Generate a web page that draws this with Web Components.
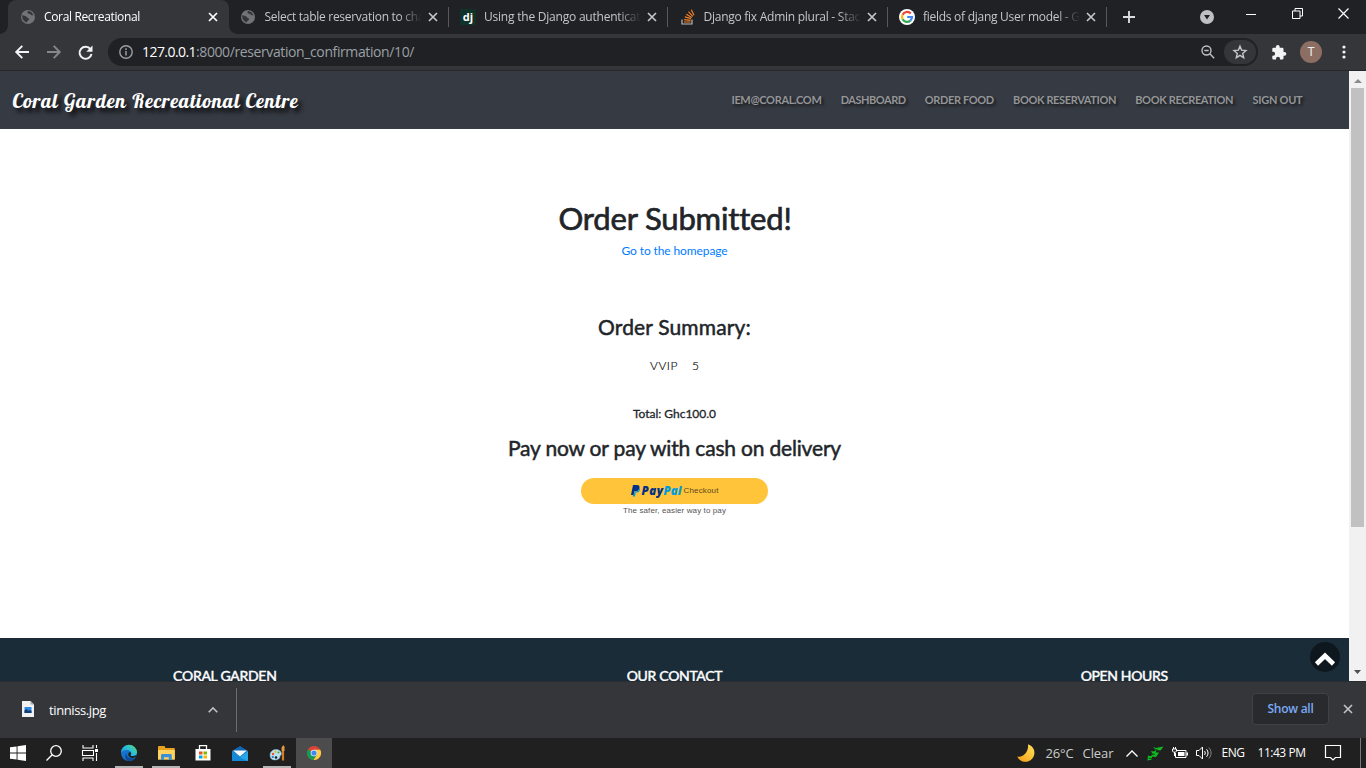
<!DOCTYPE html>
<html lang="en">
<head>
<meta charset="utf-8">
<title>Coral Recreational</title>
<style>
html,body{margin:0;width:1366px;height:768px;overflow:hidden;background:#202124}
</style>
</head>
<body>
<desktop-screen></desktop-screen>
<script>
const ICONS = {
globe:[14,14,'<circle cx="7" cy="7" r="7" fill="#707377"/><path d="M1.2 5.2c2 .2 2.600.8 4 1.200 1 .6.800 1.600 2.400 1.800 1 .8.200 1.800-.8 2.600-.9.700-.8 1.600-1.600 1.800L3 10.800C1.800 9.500 1 8 1.200 5.200zM6.200 1.400c.9 0 .6 1 .2 1.500.8 1.200 2.600.2 3.400 1.500.6 1.100 1.500.9 2.700.9L10.800 2.500 8 1.100z" fill="#33353a"/>'],
close:[10,10,'<path d="M1 1l8 8M9 1l-8 8" stroke="currentColor" stroke-width="1.7" fill="none"/>'],
dj:[16,16,'<rect width="16" height="16" rx="1" fill="#113228"/><text x="8" y="11.500" text-anchor="middle" font-family="Open Sans, sans-serif" font-weight="700" font-size="11" fill="#fff">dj</text>'],
stack:[14,16,'<path d="M1 10.500v4.500h10v-4.500" stroke="#bcbbbb" stroke-width="1.200" fill="none"/><path d="M3 13h6.500M3.100 10.600l6.400.8M3.800 7.900l6.200 1.700M5.300 5.200l5.500 3.300M7.500 2.700l4.300 4.700M10.300.8l2.700 5.500" stroke="#f48024" stroke-width="1.200"/>'],
google:[16,16,'<circle cx="8" cy="8" r="8" fill="#fff"/><g fill="none" stroke-width="2.200"><path d="M11.800 4.600A5 5 0 0 0 3.600 5.700" stroke="#ea4335"/><path d="M3.600 5.700a5 5 0 0 0 0 4.600" stroke="#fbbc05"/><path d="M3.600 10.300a5 5 0 0 0 7.800 1.300" stroke="#34a853"/><path d="M11.400 11.600A5 5 0 0 0 13 8H8.200" stroke="#4285f4"/></g>'],
plus:[12,12,'<path d="M6 0v12M0 6h12" stroke="#dadce0" stroke-width="1.900"/>'],
tabsearch:[14,14,'<circle cx="7" cy="7" r="7" fill="#bdc1c6"/><path d="M4 5h6L7 9.500z" fill="#202124"/>'],
min:[10,10,'<path d="M0 5.500h10" stroke="#fff"/>'],
restore:[11,11,'<path d="M.5 3h7.500v7.500H.5zM3 3V.5h7.500V8H8" fill="none" stroke="#fff"/>'],
winx:[11,11,'<path d="M.5.5l10 10M10.500.5l-10 10" stroke="#fff" stroke-width="1.200"/>'],
back:[14,14,'<path d="M14 7H1.500M7.300.8L1.200 7l6.100 6.200" fill="none" stroke="#f1f3f4" stroke-width="1.900"/>'],
fwd:[14,14,'<path d="M0 7h12.500M6.700.8L12.800 7l-6.100 6.200" fill="none" stroke="#85878a" stroke-width="1.900"/>'],
reload:[15,15,'<path d="M12.500 4.300A6 6 0 1 0 13.500 9" fill="none" stroke="#f1f3f4" stroke-width="2"/><path d="M14.500.5v6.200H8.300z" fill="#f1f3f4"/>'],
info:[14,14,'<circle cx="7" cy="7" r="6.200" fill="none" stroke="#9aa0a6" stroke-width="1.400"/><path d="M7 6v4.500M7 3.300v1.600" stroke="#9aa0a6" stroke-width="1.500"/>'],
zoom:[14,14,'<circle cx="5.500" cy="5.500" r="4.500" fill="none" stroke="#bdc1c6" stroke-width="1.400"/><path d="M3.300 5.500h4.400M8.800 8.800l4.400 4.400" stroke="#bdc1c6" stroke-width="1.400"/>'],
star:[14,14,'<path d="M7 1.200l1.600 3.900 4.400.4-3.300 2.900 1 4.300L7 10.400l-3.700 2.300 1-4.300L1 5.500l4.400-.4z" fill="none" stroke="#c4c7c9" stroke-width="1.400"/>'],
puzzle:[15,15,'<path d="M12.500 7H11.500V4A1.300 1.300 0 0 0 10.200 2.700H7.700V1.900a1.900 1.900 0 0 0-3.800 0v.8H1.600A1.300 1.300 0 0 0 .3 4v2.700h.8a2 2 0 0 1 0 4H.3v2.500a1.300 1.300 0 0 0 1.300 1.300H4v-.8a2 2 0 0 1 4 0v.8h2.200a1.300 1.300 0 0 0 1.300-1.300v-2.500h1a1.850 1.850 0 0 0 0-3.700z" fill="#f1f3f4"/>'],
dots:[4,14,'<g fill="#f1f3f4"><circle cx="2" cy="2" r="1.600"/><circle cx="2" cy="7" r="1.600"/><circle cx="2" cy="12" r="1.600"/></g>'],
up:[9,5,'<path d="M1 5l4-4 4 4z" fill="#8b8b8b"/>'],
down:[9,5,'<path d="M1 0h7L4.500 4z" fill="#505050"/>'],
pp:[9,12,'<path d="M2 0h4c2 0 2.900 1.200 2.400 3.200C7.900 5.300 6.500 6.300 4.500 6.300H3.300L2.600 10H0z" fill="#003087"/><path d="M8.500 2.700c.6.700.6 1.500.4 2.300-.5 1.900-1.700 2.600-3.600 2.600h-.7L4 11.500H1.700L2 9.900h.800l.7-3.400h1.200c2 0 3.400-1.100 3.800-3.800z" fill="#009cde"/>'],
top:[30,30,'<circle cx="15" cy="15" r="15" fill="#0e171e"/><path d="M6.500 22L15 13.800l8.500 8.200" fill="none" stroke="#fff" stroke-width="4.600"/>'],
file:[12,16,'<path d="M0 0h8.500L12 3.500V16H0z" fill="#f2f2f2"/><path d="M8.500 0v3.500H12" fill="#aaa"/><rect x="2.500" y="6" width="7" height="6" fill="#2f8ae0"/><path d="M2.500 12V9.500l2-1.500 2 2 1.500-1 1.500 1V12z" fill="#123e75"/>'],
chevgray:[10,6,'<path d="M.7 5.300L5 1l4.300 4.300" fill="none" stroke="#bdc1c6" stroke-width="1.600"/>'],
win:[16,16,'<path d="M0 2.300l6.600-.9v6.100H0zM7.500 1.200L16 0v7.500H7.500zM0 8.400h6.600v6.200L0 13.700zM7.500 8.400H16V16l-8.500-1.200z" fill="#fff"/>'],
search:[16,16,'<circle cx="10" cy="6" r="5.300" fill="none" stroke="#fff" stroke-width="1.300"/><path d="M6.200 9.800L.5 15.500" stroke="#fff" stroke-width="1.300"/>'],
task:[17,16,'<path d="M1 0v3h10V0M1 16v-3h10v3M.5 5.500h11v5H.5z" fill="none" stroke="#fff" stroke-width="1.100"/><path d="M14.500 0v3M14.500 8v8" stroke="#fff" stroke-width="1.100"/><rect x="13" y="4" width="3" height="3" fill="#fff"/>'],
edge:[16,16,'<defs><linearGradient id="a" x1="0" x2="1" y1=".7" y2="0"><stop stop-color="#1b9de2"/><stop offset=".55" stop-color="#2fc4cf"/><stop offset="1" stop-color="#6ddc4c"/></linearGradient></defs><circle cx="8" cy="8" r="8" fill="#1673c9"/><path d="M0 8a8 8 0 0 1 16-.5c0 2.500-2.200 3.700-4.600 3.500-1.800-.1-2.200-.9-1.600-1.600C11 7.500 9 5 6 5 3 5 .5 6 0 8z" fill="url(#a)"/><path d="M5.500 8.500c0 4 4 6 9.200 3.900-1.800 3-5.200 4-7.700 3.500-3.200-1.200-3.500-6-1.500-7.400z" fill="#0d4b99"/><path d="M8.800 7c1.400.4 1.700 1.500.9 2.500-.6.900 0 1.500 1.700 1.500 2 0 3.400-.5 4.200-1.600l-.4 2.400c-4 2.200-7.700.9-8-2.300C7.200 8.400 7.800 7.300 8.800 7z" fill="#202020"/>'],
folder:[17,14,'<path d="M0 1.200C0 .5.400 0 1 0h5.500l1 2H16a.8.800 0 0 1 .8.800V13.500H0z" fill="#e7a320"/><path d="M0 4h16.800v9.500H0z" fill="#ffd35e"/><path d="M3 14V9.500C3 8.500 3.600 8 4.500 8h7.800c.9 0 1.500.5 1.500 1.500V14h-3v-2.800H6V14z" fill="#3a8fd8"/>'],
store:[16,16,'<path d="M4.500 4V.7h7V4" fill="none" stroke="#fff" stroke-width="1.300"/><path d="M.5 4h15v11.500h-15z" fill="#fff"/><path d="M4 6.500h3.500V9.500H4z" fill="#f25022"/><path d="M8.500 6.500H12v3H8.500z" fill="#7fba00"/><path d="M4 10.500h3.500v3H4z" fill="#00a4ef"/><path d="M8.500 10.500H12v3H8.500z" fill="#ffb900"/>'],
mail:[16,15,'<path d="M0 5l8-5 8 5v10H0z" fill="#1066b5"/><path d="M1 4.500h14L8 10.500z" fill="#f2f8fc"/><path d="M0 5v10h16V5l-8 6z" fill="#28a8ea"/><path d="M0 15V5l9 7 7 3z" fill="#1488d8"/>'],
paint:[17,16,'<path d="M1 10c0-3.500 3-5.500 6-5.500s5.500 1.500 5.500 4.500c0 1.500-1.500 1-1.500 2.500 0 2-2 3.500-5 3.500-3.500 0-5-2-5-5z" fill="#b9e0f2" stroke="#7baabd" stroke-width=".5"/><circle cx="4" cy="9" r="1.200" fill="#e8512e"/><circle cx="6.500" cy="6.800" r="1.100" fill="#e8b520"/><circle cx="9.500" cy="7.500" r="1.100" fill="#51a942"/><circle cx="3.800" cy="12" r="1.100" fill="#2473c1"/><circle cx="7" cy="12.500" r="1.300" fill="#202020"/><path d="M14 6v9.500" stroke="#d77926" stroke-width="2.200"/><path d="M12.600 6V3c0-1.500 1.400-1.500 1.400-3 1.600 1.500 2 2 1.500 3v3z" fill="#e49a48"/>'],
chrome:[14,14,'<circle cx="7" cy="7" r="7" fill="#db4437"/><path d="M7 7L.9 3.600A7 7 0 0 0 6.500 14L10 8.700z" fill="#0f9d58"/><path d="M7 3.700h6.200A7 7 0 0 1 6.500 14L10 8.700z" fill="#ffcd40"/><circle cx="7" cy="7" r="3.300" fill="#f1f1f1"/><circle cx="7" cy="7" r="2.600" fill="#4285f4"/>'],
moon:[18,18,'<defs><linearGradient id="m" x1="0" x2="1" y1="1" y2="0"><stop stop-color="#f49b13"/><stop offset="1" stop-color="#ffe45c"/></linearGradient></defs><path d="M11 .2A9 9 0 1 1 .2 12.500C5 14 12 9 11 .2z" fill="url(#m)"/>'],
chevw:[12,7,'<path d="M.5 6.500L6 1l5.500 5.500" fill="none" stroke="#fff" stroke-width="1.300"/>'],
green:[17,15,'<path d="M6 1l3 1 7.500-1.500-3 4-4-.5-1 2.500h3.500l-3 4.500-3.500-.5L4 13l1.500.5-5 1L1 9.500l2.500.8L6 8.500 4 5l3 .5L9 4z" fill="#11bd22"/><path d="M7 3l4 1M4 7.500l4 1M1.500 12l3.500 1" stroke="#07530e"/>'],
battery:[16,12,'<path d="M4.500 3.500H14v7H3.500V6" fill="none" stroke="#fff"/><path d="M6 5h6.500v4H6zM14.500 5.500H16v3h-1.500z" fill="#fff"/><path d="M.5 2h4v2L3.500 5.200h-2L.5 4zM1.500 0v2M3.500 0v2M2.500 5v4" fill="none" stroke="#fff"/>'],
sound:[16,14,'<path d="M.5 4.500H3L6.500 1v12L3 9.500H.5z" fill="none" stroke="#fff"/><path d="M8.500 5c1 1.200 1 2.800 0 4M10.500 3.200c2 2.200 2 5.400 0 7.600" fill="none" stroke="#fff"/><path d="M12.800 1.500c3 3.200 3 7.800 0 11" fill="none" stroke="#888"/>'],
note:[16,16,'<path d="M.5.5h15v12h-5L8 15l-2.500-2.500h-5z" fill="none" stroke="#fff" stroke-width="1.200"/>']
};

// Defines an element whose shadow root is cloned from a template.
function define(name, html, setup) {
  const t = document.createElement('template');
  t.innerHTML = html;
  customElements.define(name, class extends HTMLElement {
    connectedCallback() {
      if (this.shadowRoot) return;
      this.attachShadow({mode: 'open'}).append(t.content.cloneNode(true));
      if (setup) setup(this, this.shadowRoot);
    }
  });
}

define('ui-icon', '<style>:host{display:block;flex:none}svg{display:block;overflow:visible}</style>', (el, root) => {
  const [w, h, body] = ICONS[el.getAttribute('name')];
  const d = document.createElement('div');
  d.innerHTML = `<svg width="${w}" height="${h}" viewBox="0 0 ${w} ${h}">${body}</svg>`;
  root.append(d);
});

// A single line whose tracking is set so that its first n characters span w pixels.
define('fit-text', '<style>:host{display:block;flex:none;white-space:nowrap}span{display:inline-block}</style><span></span>', (el, root) => {
  const s = root.querySelector('span'), text = el.getAttribute('text');
  const n = +(el.getAttribute('n') || text.length), w = +el.getAttribute('w');
  s.textContent = text.slice(0, n);
  const natural = s.getBoundingClientRect().width;
  s.style.letterSpacing = ((w - natural) / n).toFixed(4) + 'px';
  s.textContent = text;
  if (n === text.length) el.style.width = w + 'px';
});

define('browser-tab', `<style>
:host{display:flex;align-items:center;flex:none;width:219.5px;height:34px;box-sizing:border-box;padding-left:11.500px;color:#c3c6ca;position:relative}
:host([active]){width:221px;background:#35363a;border-radius:8px 8px 0 0;padding-left:13px;color:#fff}
:host([active])::before,:host([active])::after{content:"";position:absolute;bottom:0;width:8px;height:8px}
:host([active])::before{left:-8px;background:radial-gradient(circle at 0 0,transparent 7.5px,#35363a 8px)}
:host([active])::after{right:-8px;background:radial-gradient(circle at 100% 0,transparent 7.5px,#35363a 8px)}
.ic{width:24px}.t{width:156px;overflow:hidden;padding-bottom:1px;-webkit-mask-image:linear-gradient(90deg,#000 134px,transparent 157px)}
:host([active]) .ic{width:23px}
.x{margin-left:7.300px;flex:1}.s{width:1px;height:20px;background:#56585c}
:host([active]) .s{display:none}:host([active]) .x{margin-left:8px}
</style><div class="ic"><slot name="icon"></slot></div><div class="t"><slot></slot></div><ui-icon class="x" name="close"></ui-icon><div class="s"></div>`);

define('tab-strip', `<style>
:host{display:flex;height:34px;padding-left:8px;background:#202124;align-items:center;font:12px "Open Sans",sans-serif}
</style>
<browser-tab active><ui-icon slot="icon" name="globe"></ui-icon><fit-text text="Coral Recreational" w="96"></fit-text></browser-tab>
<browser-tab><ui-icon slot="icon" name="globe"></ui-icon><fit-text text="Select table reservation to cha" n="27" w="138"></fit-text></browser-tab>
<browser-tab><ui-icon slot="icon" name="dj"></ui-icon><fit-text text="Using the Django authenticat" n="16" w="92"></fit-text></browser-tab>
<browser-tab><ui-icon slot="icon" name="stack" style="margin-left:1px"></ui-icon><fit-text text="Django fix Admin plural - Stac" n="23" w="125"></fit-text></browser-tab>
<browser-tab><ui-icon slot="icon" name="google"></ui-icon><fit-text text="fields of djang User model - G" n="26" w="139"></fit-text></browser-tab>
<ui-icon name="plus" style="margin-left:16px"></ui-icon>
<ui-icon name="tabsearch" style="margin-left:65px"></ui-icon>
<ui-icon name="min" style="margin:-6px 0 0 32px"></ui-icon>
<ui-icon name="restore" style="margin:-7px 0 0 36px"></ui-icon>
<ui-icon name="winx" style="margin:-7px 0 0 35px"></ui-icon>`);

define('tool-bar', `<style>
:host{display:flex;height:37px;box-sizing:border-box;border-bottom:1px solid #262729;background:#35363a;align-items:center;padding-left:15px}
.url{display:flex;align-items:center;width:1150px;height:28px;box-sizing:border-box;border-radius:14px;background:#202124;margin-left:15px;padding-left:11px;font:14px "Open Sans",sans-serif;color:#9aa0a6}
.url fit-text{margin-top:-1px}
.star{display:flex;align-items:center;justify-content:center;width:32px;height:24px;border-radius:12px;background:#35363a;margin-left:9px}
.av{width:22px;height:22px;border-radius:50%;background:#8d6e63;color:#eee;font:12px/22px Roboto,sans-serif;text-align:center;margin-left:13px}
</style>
<ui-icon name="back"></ui-icon><ui-icon name="fwd" style="margin-left:18px"></ui-icon><ui-icon name="reload" style="margin-left:17px"></ui-icon>
<div class="url"><ui-icon name="info"></ui-icon><fit-text text="127.0.0.1" w="54" style="color:#fff;margin-left:9px"></fit-text><fit-text text=":8000/reservation_confirmation/10/" w="218"></fit-text>
<ui-icon name="zoom" style="margin-left:787px"></ui-icon><div class="star"><ui-icon name="star"></ui-icon></div></div>
<ui-icon name="puzzle" style="margin-left:14px"></ui-icon><div class="av">T</div><ui-icon name="dots" style="margin-left:20px"></ui-icon>`);

define('site-nav', `<style>
:host{display:flex;align-items:center;height:58px;background:#363a42;padding:0 47px 0 12px;font:bold 11px Lato,sans-serif;color:#939597;text-shadow:2px 2px 3px rgba(0,0,0,.6)}
.brand{font:italic 900 20px "Lobster Two",Lato,sans-serif;color:#fff;text-shadow:4px 4px 4px #0a0b0d;flex:1}
nav{display:flex;gap:19.200px;margin-top:-1px;transform:translateX(.4px)}
</style><fit-text class="brand" text="Coral Garden Recreational Centre" w="287"></fit-text>
<nav><fit-text text="IEM@CORAL.COM" w="90"></fit-text><fit-text text="DASHBOARD" w="65"></fit-text><fit-text text="ORDER FOOD" w="69"></fit-text><fit-text text="BOOK RESERVATION" w="103"></fit-text><fit-text text="BOOK RECREATION" w="98"></fit-text><fit-text text="SIGN OUT" w="50"></fit-text></nav>`,
(el, root) => { root.querySelector('.brand').style.width = 'auto'; });

define('pay-button', `<style>
:host{display:flex;flex-direction:column;align-items:center;font:8px "Liberation Sans",sans-serif;color:#555}
.b{display:flex;align-items:center;justify-content:center;width:187px;height:26px;border-radius:13px;background:#ffc439}
.w{font:italic 800 11.500px "Open Sans",sans-serif;color:#003087;display:flex;margin:-1px 0 0 2px}.w fit-text+fit-text{color:#009cde}
.c{color:#5a4a24;margin:-2px 0 0 2px}.s{line-height:12px;margin-top:1px}
</style><div class="b"><ui-icon name="pp"></ui-icon><div class="w"><fit-text text="Pay" w="22"></fit-text><fit-text text="Pal" w="18"></fit-text></div><fit-text class="c" text="Checkout" w="35"></fit-text></div><fit-text class="s" text="The safer, easier way to pay" w="103"></fit-text>`);

define('order-page', `<style>
:host{display:flex;flex-direction:column;align-items:center;height:509px;box-sizing:border-box;padding-top:70px;background:#fff;color:#212529;font:12px/18px Lato,sans-serif}
h1,h2{margin:0;font-weight:400}h1{font-size:31px;line-height:38px;-webkit-text-stroke:.7px}h2{font-size:21px;line-height:26px;-webkit-text-stroke:.5px}
.l{color:#007bff;margin-top:5px}.r{display:flex;gap:14px;font-weight:300;-webkit-text-stroke:.2px;margin:17px 0 30px;color:#111}.t{-webkit-text-stroke:.3px;margin-bottom:12px}
</style><h1><fit-text text="Order Submitted!" w="232"></fit-text></h1><fit-text class="l" text="Go to the homepage" w="106"></fit-text>
<h2 style="margin-top:54px"><fit-text text="Order Summary:" w="153"></fit-text></h2>
<div class="r"><fit-text text="VVIP" w="28"></fit-text><fit-text text="5" w="7"></fit-text></div>
<fit-text class="t" text="Total: Ghc100.0" w="83"></fit-text><h2><fit-text text="Pay now or pay with cash on delivery" w="333"></fit-text></h2><pay-button style="margin-top:17px"></pay-button>`);

define('site-footer', `<style>
:host{display:grid;grid-template-columns:repeat(3,1fr);justify-items:center;height:43px;box-sizing:border-box;padding-top:29px;overflow:hidden;background:#1b2c39;color:#fff;font:14px/18px Lato,sans-serif;-webkit-text-stroke:.45px;position:relative}
.up{position:absolute;right:9px;top:4px}
</style><fit-text text="CORAL GARDEN" w="103.500"></fit-text><fit-text text="OUR CONTACT" w="95.500"></fit-text><fit-text text="OPEN HOURS" w="87"></fit-text><ui-icon class="up" name="top"></ui-icon>`);

define('scroll-bar', `<style>
:host{display:flex;flex-direction:column;align-items:center;width:17px;background:#f1f1f1}
.th{width:13px;height:439px;background:#c1c1c1;margin-top:5px}
</style><ui-icon name="up" style="margin-top:7px"></ui-icon><div class="th"></div><ui-icon name="down" style="margin:auto 0 6px"></ui-icon>`);

define('download-shelf', `<style>
:host{display:flex;align-items:center;height:57px;box-sizing:border-box;border-top:1px solid #2b2c2f;background:#35363a;padding-left:22px;color:#fff;font:13px "Open Sans",sans-serif}
.s{width:1px;height:44px;background:#6a6c70;margin-left:18px}
.b{display:flex;align-items:center;justify-content:center;width:77px;height:32px;box-sizing:border-box;border:1px solid #3f4145;border-radius:4px;background:#292a2d;color:#7aa9f7;font:600 12px "Open Sans",sans-serif;margin:-3px 14px 0 auto}
</style><ui-icon name="file" style="margin-top:-2px"></ui-icon><fit-text text="tinniss.jpg" w="57" style="margin-left:15px"></fit-text><ui-icon name="chevgray" style="margin-left:102px"></ui-icon><div class="s"></div>
<div class="b"><fit-text text="Show all" w="46"></fit-text></div><ui-icon name="close" style="color:#bdc1c6;margin-right:13px;margin-top:-2px"></ui-icon>`);

define('task-cell', `<style>
:host{display:flex;align-items:center;justify-content:center;width:37px;height:30px;box-sizing:border-box;flex:none;position:relative}
:host([open])::after{content:"";position:absolute;left:4.500px;right:4.500px;bottom:0;height:2px;background:#b5b5b5}
:host([current]){background:#4c4c4c;width:36px}
</style><slot></slot>`);

define('task-bar', `<style>
:host{display:flex;align-items:center;height:30px;background:#202020;color:#fff;font:12px "Open Sans",sans-serif}
.w{font-size:13px;color:#ccc}
.e{width:1px;height:30px;background:#777;margin-left:19px}
</style>
<task-cell style="width:36px"><ui-icon name="win"></ui-icon></task-cell><task-cell style="width:36px"><ui-icon name="search"></ui-icon></task-cell><task-cell style="width:38.500px;padding-right:2px"><ui-icon name="task"></ui-icon></task-cell>
<task-cell open><ui-icon name="edge"></ui-icon></task-cell><task-cell open><ui-icon name="folder"></ui-icon></task-cell><task-cell style="padding-right:1px"><ui-icon name="store"></ui-icon></task-cell><task-cell><ui-icon name="mail"></ui-icon></task-cell><task-cell open><ui-icon name="paint"></ui-icon></task-cell><task-cell current><ui-icon name="chrome"></ui-icon></task-cell>
<ui-icon name="moon" style="margin-left:685px"></ui-icon><fit-text class="w" text="26°C" w="28" style="margin-left:11px"></fit-text><fit-text class="w" text="Clear" w="31" style="margin-left:9px"></fit-text>
<ui-icon name="chevw" style="margin-left:12px"></ui-icon><ui-icon name="green" style="margin-left:9px"></ui-icon><ui-icon name="battery" style="margin-left:8px"></ui-icon><ui-icon name="sound" style="margin-left:8px"></ui-icon>
<fit-text text="ENG" w="23" style="margin:-1px 0 0 10px"></fit-text><fit-text text="11:43 PM" w="48" style="margin:-1px 0 0 13px"></fit-text><ui-icon name="note" style="margin-left:19px"></ui-icon><div class="e"></div>`);

define('desktop-screen', `<style>
:host{display:flex;flex-direction:column;width:1366px;height:768px;overflow:hidden}
.v{display:flex;height:610px}.p{width:1349px}
</style><tab-strip></tab-strip><tool-bar></tool-bar><div class="v"><div class="p"><site-nav></site-nav><order-page></order-page><site-footer></site-footer></div><scroll-bar></scroll-bar></div><download-shelf></download-shelf><task-bar></task-bar>`);
</script>
</body>
</html>
